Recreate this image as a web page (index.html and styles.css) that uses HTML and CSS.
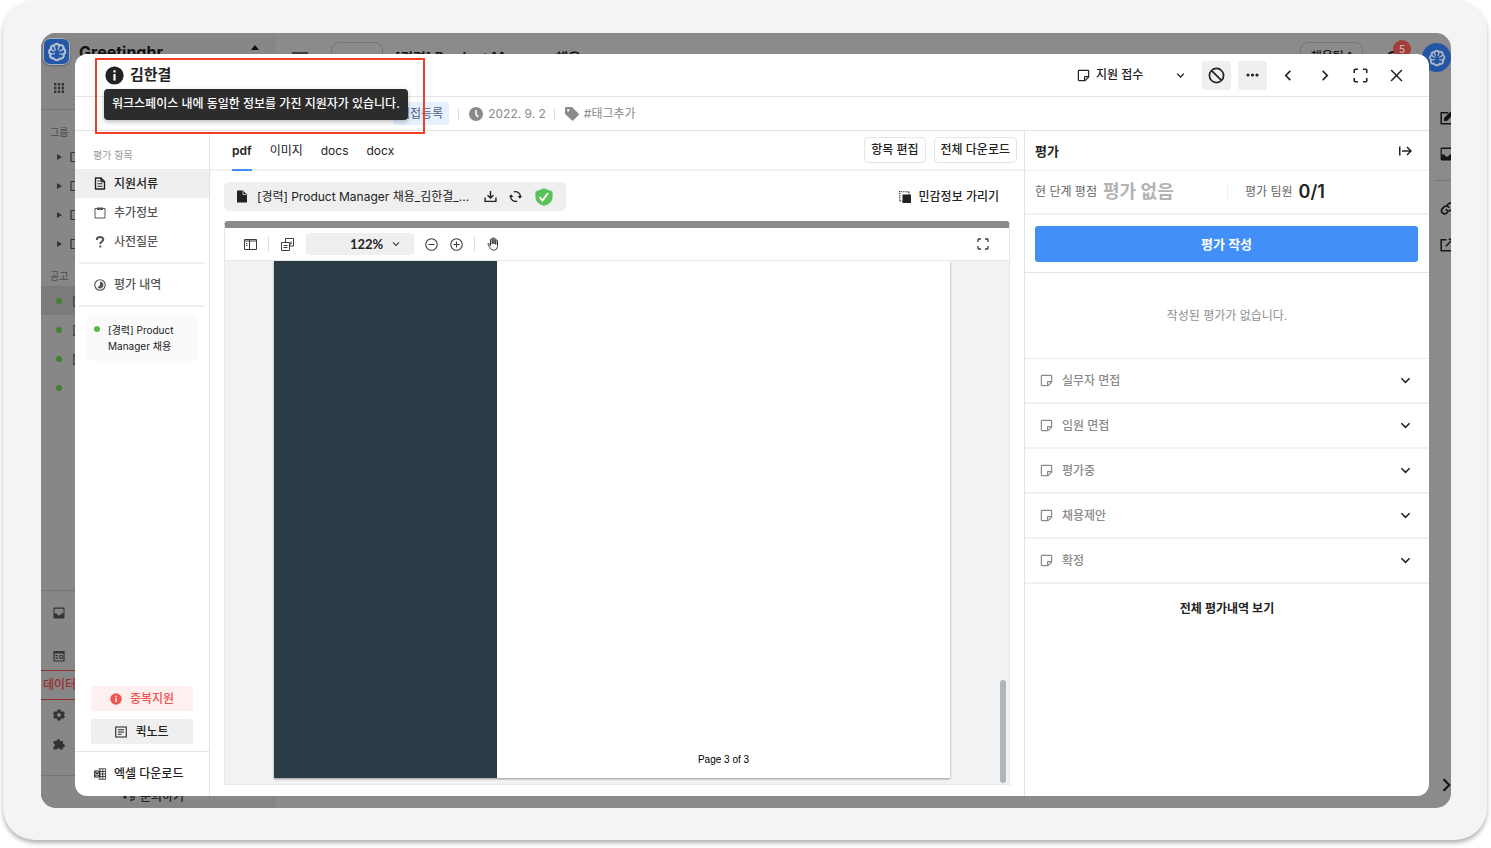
FILE: index.html
```html
<!DOCTYPE html>
<html lang="ko">
<head>
<meta charset="utf-8">
<meta name="viewport" content="width=device-width, initial-scale=1">
<title>Greetinghr</title>
<link rel="stylesheet" href="styles.css">
</head>
<body>
<svg class="sprite" aria-hidden="true">
  <symbol id="flower" viewBox="0 0 24 24"><g fill="none" stroke="currentColor" stroke-linejoin="round" stroke-linecap="round"><path stroke-width="2.600" d="M8.500 4.500C9.500 1.500 13.500 1.500 14.500 4.200C17.500 2.500 20.500 5 19.800 8C22.800 9.500 22.500 13.500 20 14.500C21 18 18.500 20.500 15.500 19.800C13.500 22.500 9.500 22.500 8 19.500C4.500 20 2.800 17 4.500 14.500C1.500 13 2 9 5 8.500C4 5.500 6 3.500 8.500 4.500Z"/><path stroke-width="1.600" d="M8.500 5l1.500 4.500M14.500 5l-1 4M19.500 8.500L15.500 11M20 14.500h-4.500M5 9l3.500 2M5 14.500l4-.5"/></g></symbol>
  <symbol id="note" viewBox="0 0 24 24"><path fill="none" stroke="currentColor" stroke-width="2.200" stroke-linejoin="round" d="M2.500 4a1.500 1.500 0 0 1 1.500-1.500h16A1.500 1.500 0 0 1 21.500 4v11l-6.500 6.500H4A1.500 1.500 0 0 1 2.500 20zM14 21v-7h7"/></symbol>
  <symbol id="down" viewBox="0 0 24 24"><path fill="none" stroke="currentColor" stroke-width="3.400" d="M3 7l9 9 9-9"/></symbol>
  <symbol id="info" viewBox="0 0 24 24"><circle cx="12" cy="12" r="11.500" fill="currentColor"/><path fill="#fff" d="M10.600 5.500h2.800v2.800h-2.800zM10.600 10.200h2.800v8h-2.800z"/></symbol>
  <symbol id="expand" viewBox="0 0 24 24"><path fill="none" stroke="currentColor" stroke-width="2.600" d="M2 8V3.500Q2 2 3.500 2H8M16 2h4.500Q22 2 22 3.500V8M22 16v4.500q0 1.500-1.500 1.500H16M8 22H3.500Q2 22 2 20.500V16"/></symbol>
  <symbol id="inbox" viewBox="0 0 24 24"><path fill="currentColor" fill-rule="evenodd" d="M3 1h18a2 2 0 0 1 2 2v18a2 2 0 0 1-2 2H3a2 2 0 0 1-2-2V3a2 2 0 0 1 2-2zm0 2.500V13h5c0 5 8 5 8 0h5V3.500z"/></symbol>
  <symbol id="board" viewBox="0 0 24 24"><path fill="none" stroke="currentColor" stroke-width="2" d="M2 3h20v19H2z"/><path fill="currentColor" d="M6 1h12v5H6z"/></symbol>
  <symbol id="folder" viewBox="0 0 24 24"><path fill="none" stroke="currentColor" stroke-width="2.400" stroke-linejoin="round" d="M2 3h8l2 3h10v15H2z"/></symbol>
</svg>

<main class="frame">
<div class="screen">

  <aside class="side" aria-label="워크스페이스">
    <div class="brand"><span class="logo"><svg width="20" height="20"><use href="#flower"/></svg></span><strong>Greetinghr</strong><svg class="updown" width="8" height="14" viewBox="0 0 8 14"><path fill="currentColor" d="M4 0l4 5H0zM4 14l4-5H0z"/></svg></div>
    <div class="apps"><svg width="10" height="10" viewBox="0 0 10 10"><path fill="currentColor" d="M0 0h2.400v2.400H0zM3.800 0h2.400v2.400H3.800zM7.600 0H10v2.400H7.600zM0 3.800h2.400v2.400H0zM3.800 3.800h2.400v2.400H3.800zM7.600 3.800H10v2.400H7.600zM0 7.600h2.400V10H0zM3.800 7.600h2.400V10H3.800zM7.600 7.600H10V10H7.600z"/></svg></div>
    <h2>그룹</h2>
    <div class="group"><i class="tri"></i><svg width="14" height="12"><use href="#folder"/></svg></div>
    <div class="group"><i class="tri"></i><svg width="14" height="12"><use href="#folder"/></svg></div>
    <div class="group"><i class="tri"></i><svg width="14" height="12"><use href="#folder"/></svg></div>
    <div class="group"><i class="tri"></i><svg width="14" height="12"><use href="#folder"/></svg></div>
    <h2 class="posts">공고</h2>
    <div class="post on"><i class="dot"></i>[</div>
    <div class="post"><i class="dot"></i>[</div>
    <div class="post"><i class="dot"></i>[</div>
    <div class="post"><i class="dot"></i></div>
    <div class="side-foot">
      <div class="tool tall"><svg width="12" height="12"><use href="#inbox"/></svg></div>
      <div class="tool tall"><svg width="12" height="12" viewBox="0 0 24 24"><path fill="none" stroke="currentColor" stroke-width="2.400" d="M2 3h20v19H2z"/><path fill="currentColor" d="M2 2h20v5H2zM5 10h5v2.500H5zM5 15h5v2.500H5z"/><path fill="none" stroke="currentColor" stroke-width="2" d="M13.500 11h5v6h-5z"/></svg></div>
      <div class="data">데이터</div>
      <div class="tool"><svg width="12" height="12" viewBox="0 0 24 24"><path fill="currentColor" fill-rule="evenodd" d="M9 1h6l.8 3.600 2 1.100L21.300 4.600l2.700 4.700-2.700 2.500v.8l2.700 2.400-2.700 4.700-3.500-1.100-2 1.100L15 23H9l-.8-3.300-2-1.100-3.500 1.100L0 15l2.700-2.400v-.8L0 9.300l2.700-4.700 3.500 1.100 2-1.100zM12 8a4 4 0 1 0 0 8 4 4 0 0 0 0-8z"/></svg></div>
      <div class="tool"><svg width="12" height="12" viewBox="0 0 24 24"><path fill="currentColor" d="M1 6h6.500a3.300 3.300 0 1 1 6.500 0h6v6.200a3.200 3.200 0 1 1 0 6.300V23h-6a3.200 3.200 0 0 0-6.200 0H1v-6.200a3 3 0 0 0 0-6z"/></svg></div>
      <div class="ask"><svg width="13" height="12" viewBox="0 0 26 24"><path fill="none" stroke="currentColor" stroke-width="2.600" d="M4 10a9 9 0 0 1 18 0v9q0 3-4 3h-4"/><path fill="currentColor" d="M1 10h6v9H1zM15 10h4v8h-4z"/></svg>문의하기</div>
    </div>
  </aside>

  <section class="board">
    <header class="topbar">
      <svg class="burger" width="16" height="12" viewBox="0 0 16 12"><path fill="currentColor" d="M0 0h16v3H0zM0 6h16v2H0z"/></svg>
      <span class="status"><i class="dot"></i></span>
      <strong>[경력] Product Manager 채용</strong>
      <span class="team">채용팀 1</span>
      <span class="bell"><svg width="16" height="16" viewBox="0 0 24 24"><path fill="none" stroke="currentColor" stroke-width="3" d="M4 19V11a8 8 0 0 1 16 0v8z"/></svg><b>5</b></span>
      <span class="avatar"><svg width="18" height="18"><use href="#flower"/></svg></span>
    </header>
    <div class="rail">
      <svg width="14" height="14" viewBox="0 0 24 24"><path fill="none" stroke="currentColor" stroke-width="2.600" d="M14 3H2v19h20V12"/><path fill="currentColor" d="M7 17v-5L18 1l5 5-11 11z"/></svg>
      <svg width="14" height="14"><use href="#inbox"/></svg>
      <hr>
      <svg width="15" height="15" viewBox="0 0 24 24"><path fill="none" stroke="currentColor" stroke-width="2.600" stroke-linecap="round" d="M10 14a5 5 0 0 0 7.500.5l3-3A5 5 0 0 0 13.500 4.500L12 6M14 10a5 5 0 0 0-7.500-.5l-3 3a5 5 0 0 0 7 7L12 18"/></svg>
      <svg width="14" height="14" viewBox="0 0 24 24"><path fill="none" stroke="currentColor" stroke-width="2.600" d="M11 3H2v19h19v-9M15 2h7v7M22 2L10 14"/></svg>
      <svg class="rail-end" width="14" height="14" viewBox="0 0 24 24"><path fill="none" stroke="currentColor" stroke-width="3.600" d="M6 2l10 10L6 22"/></svg>
    </div>
  </section>

  <article class="modal" role="dialog" aria-label="김한결">
    <header class="head">
      <svg width="19" height="19"><use href="#info"/></svg>
      <h1>김한결</h1>
      <div class="stage"><svg width="13" height="13"><use href="#note"/></svg><select aria-label="단계"><option>지원 접수</option></select><svg width="9" height="9"><use href="#down"/></svg></div>
      <div class="actions">
        <button class="fill" aria-label="탈락"><svg width="17" height="17" viewBox="0 0 24 24"><path fill="none" stroke="currentColor" stroke-width="2.400" d="M12 2a10 10 0 1 0 0 20 10 10 0 0 0 0-20zM5 5l14 14"/></svg></button>
        <button class="fill" aria-label="더보기"><svg width="13" height="4" viewBox="0 0 13 4"><circle cx="2" cy="2" r="1.600"/><circle cx="6.500" cy="2" r="1.600"/><circle cx="11" cy="2" r="1.600"/></svg></button>
        <button aria-label="이전"><svg width="11" height="11" viewBox="0 0 24 24"><path fill="none" stroke="currentColor" stroke-width="3.600" d="M16 2L6 12l10 10"/></svg></button>
        <button aria-label="다음"><svg width="11" height="11" viewBox="0 0 24 24"><path fill="none" stroke="currentColor" stroke-width="3.600" d="M8 2l10 10L8 22"/></svg></button>
        <button aria-label="전체 화면"><svg width="15" height="15"><use href="#expand"/></svg></button>
        <button aria-label="닫기"><svg width="13" height="13" viewBox="0 0 24 24"><path fill="none" stroke="currentColor" stroke-width="2.800" d="M2 2l20 20M22 2L2 22"/></svg></button>
      </div>
    </header>
    <div class="meta">
      <span class="chip">직접등록</span>
      <span class="item"><svg width="14" height="14" viewBox="0 0 24 24"><circle cx="12" cy="12" r="12" fill="currentColor"/><path fill="none" stroke="#fff" stroke-width="2.600" d="M12 5v8l4 4"/></svg>2022. 9. 2</span>
      <span class="item"><svg width="14" height="14" viewBox="0 0 24 24"><path fill="currentColor" fill-rule="evenodd" d="M0 2Q0 0 2 0H12l11.500 11.500q1 1 0 2l-9.500 9.500q-1 1-2 0L0 12zM5.500 3.500a2 2 0 1 0 0 4 2 2 0 0 0 0-4z"/></svg>#태그추가</span>
    </div>

    <div class="body">
      <nav class="nav">
        <h2>평가 항목</h2>
        <a class="on" href="#docs"><svg width="12" height="13" viewBox="0 0 24 26"><path fill="none" stroke="currentColor" stroke-width="2.800" stroke-linejoin="round" d="M3 2h11l7 7v15H3zM14 2v7h7"/><path stroke="currentColor" stroke-width="2.200" d="M7 8h4M7 13.500h10M7 18.500h10"/></svg>지원서류</a>
        <a href="#extra"><svg width="12" height="12"><use href="#board"/></svg>추가정보</a>
        <a href="#survey"><svg width="12" height="12" viewBox="0 0 24 24"><path fill="none" stroke="currentColor" stroke-width="4" d="M5.500 8q0-6 6.500-6t6.500 5c0 4-6 4-6 9"/><path fill="currentColor" d="M10.500 19h4v4h-4z"/></svg>사전질문</a>
        <hr>
        <a href="#history"><svg width="12" height="12" viewBox="0 0 24 24"><circle cx="12" cy="12" r="10.500" fill="none" stroke="currentColor" stroke-width="2.400"/><path fill="currentColor" d="M12 5a7 7 0 1 1-5 12l5-5z"/></svg>평가 내역</a>
        <hr>
        <p class="posting"><i class="dot"></i>[경력] Product Manager 채용</p>
        <div class="nav-foot">
          <button class="dup"><svg width="12" height="12"><use href="#info"/></svg>중복지원</button>
          <button class="memo"><svg width="12" height="12" viewBox="0 0 24 24"><path fill="none" stroke="currentColor" stroke-width="2.200" d="M1.500 2h21v20h-21zM6 7.500h12M6 12h12M6 16.500h7"/></svg>퀵노트</button>
        </div>
        <a class="excel" href="#excel"><svg width="12" height="12" viewBox="0 0 24 24"><path fill="none" stroke="currentColor" stroke-width="1.600" d="M9 1.500h14v21H9M12 7h11M12 12h11M12 17h11M17.500 2v20M12 2v20"/><path fill="none" stroke="currentColor" stroke-width="2.400" d="M1.500 6h9v12h-9zM3.500 8.500l5 7M8.500 8.500l-5 7"/></svg>엑셀 다운로드</a>
      </nav>

      <section class="docs">
        <div class="tabs">
          <a class="on" href="#pdf">pdf</a><a href="#image">이미지</a><a href="#d">docs</a><a href="#x">docx</a>
          <div class="tab-actions"><button>항목 편집</button><button>전체 다운로드</button></div>
        </div>
        <div class="file-row">
          <div class="file">
            <svg width="12" height="13" viewBox="0 0 24 26"><path fill="currentColor" d="M2 2q0-1 1-1h11l8 8v15q0 1-1 1H3q-1 0-1-1z"/><path fill="none" stroke="#efefef" stroke-width="1.500" d="M14 2v7h7"/></svg>
            <span>[경력] Product Manager 채용_김한결_...</span>
            <button aria-label="다운로드"><svg width="13" height="13" viewBox="0 0 24 24"><path fill="none" stroke="currentColor" stroke-width="2.600" d="M12 2v13M6.500 9.500L12 15l5.500-5.500M2 14v7h20v-7"/></svg></button>
            <button aria-label="새로고침"><svg width="13" height="13" viewBox="0 0 24 24"><path fill="none" stroke="currentColor" stroke-width="2.600" d="M9 3.500A9 9 0 0 1 21 12v2M15 20.500A9 9 0 0 1 3 12v-2"/><path fill="currentColor" d="M16 11h8l-4 5zM0 13h8L4 8z"/></svg></button>
            <svg width="20" height="20" viewBox="0 0 20 20"><path fill="#5bbf5a" stroke="#dff0de" stroke-width="1" d="M10 .8l9 3.500v5.700c0 4.500-3.500 7.500-9 9.300C4.500 17.500 1 14.500 1 10V4.300z"/><path fill="none" stroke="#fff" stroke-width="1.800" d="M5.500 10l3 3.500L14 6"/></svg>
          </div>
          <button class="mask"><svg width="12" height="12" viewBox="0 0 24 24"><path fill="currentColor" d="M7 7h17v17H7z"/><path fill="none" stroke="currentColor" stroke-width="2.200" stroke-dasharray="2.400 1.800" d="M0 1.500h20M1.500 0v20M20 1.500V7M1.500 20H7"/></svg>민감정보 가리기</button>
        </div>
        <div class="viewer">
          <div class="tools">
            <button aria-label="사이드바"><svg width="13" height="11" viewBox="0 0 26 22"><path fill="none" stroke="currentColor" stroke-width="2" d="M1 1h24v20H1zM11 1v20M1 4h24M4 9h3M4 13h3"/></svg></button>
            <i class="sep"></i>
            <button aria-label="페이지"><svg width="13" height="13" viewBox="0 0 26 26"><path fill="none" stroke="currentColor" stroke-width="2" d="M9 8V1h16v15h-7M1 9h16v16H1zM5 15h8M5 19h8M20 7v5h-2"/></svg></button>
            <div class="zoom"><select aria-label="배율"><option>122%</option></select><svg width="8" height="8"><use href="#down"/></svg></div>
            <button aria-label="축소"><svg width="13" height="13" viewBox="0 0 26 26"><path fill="none" stroke="currentColor" stroke-width="2.200" d="M13 1.500a11.500 11.500 0 1 0 0 23 11.500 11.500 0 0 0 0-23zM7 13h12"/></svg></button>
            <button aria-label="확대"><svg width="13" height="13" viewBox="0 0 26 26"><path fill="none" stroke="currentColor" stroke-width="2.200" d="M13 1.500a11.500 11.500 0 1 0 0 23 11.500 11.500 0 0 0 0-23zM7 13h12M13 7v12"/></svg></button>
            <i class="sep"></i>
            <button aria-label="이동"><svg width="12" height="14" viewBox="0 0 24 28"><path fill="none" stroke="currentColor" stroke-width="2" stroke-linejoin="round" stroke-linecap="round" d="M7 17V6q0-2 1.800-2T10.500 6v7M10.500 13V3.500q0-2 1.800-2t1.700 2V13M14 13V5q0-2 1.700-2t1.800 2v9M17.500 14V8q0-2 1.700-2T21 8v11q0 7.500-8 7.500-4.500 0-7-5L2 15q-.5-2 1.200-2.200T7 17"/></svg></button>
            <button class="full" aria-label="전체 화면"><svg width="12" height="12"><use href="#expand"/></svg></button>
          </div>
          <div class="canvas">
            <div class="page"><div class="band"></div><p>Page 3 of 3</p></div>
            <i class="thumb"></i>
          </div>
        </div>
      </section>

      <section class="eval">
        <header class="eval-head"><h2>평가</h2><button aria-label="패널 접기"><svg width="13" height="10" viewBox="0 0 26 20"><path fill="none" stroke="currentColor" stroke-width="3" d="M1.500 1v18M6 10h18M16 2l8 8-8 8"/></svg></button></header>
        <div class="stats"><p>현 단계 평점 <b class="none">평가 없음</b></p><p>평가 팀원 <b>0/1</b></p></div>
        <div class="write"><button>평가 작성</button></div>
        <p class="empty">작성된 평가가 없습니다.</p>
        <button class="step"><svg width="13" height="13"><use href="#note"/></svg>실무자 면접<svg class="arrow" width="11" height="11"><use href="#down"/></svg></button>
        <button class="step"><svg width="13" height="13"><use href="#note"/></svg>임원 면접<svg class="arrow" width="11" height="11"><use href="#down"/></svg></button>
        <button class="step"><svg width="13" height="13"><use href="#note"/></svg>평가중<svg class="arrow" width="11" height="11"><use href="#down"/></svg></button>
        <button class="step"><svg width="13" height="13"><use href="#note"/></svg>채용제안<svg class="arrow" width="11" height="11"><use href="#down"/></svg></button>
        <button class="step"><svg width="13" height="13"><use href="#note"/></svg>확정<svg class="arrow" width="11" height="11"><use href="#down"/></svg></button>
        <button class="all">전체 평가내역 보기</button>
      </section>
    </div>

    <div class="tooltip" role="tooltip">워크스페이스 내에 동일한 정보를 가진 지원자가 있습니다.</div>
    <div class="marker"></div>
  </article>
</div>
</main>
</body>
</html>
```
FILE: styles.css
```css
* { box-sizing: border-box; }
body, h1, h2, p, hr { margin: 0; }
body {
  display: flex;
  height: 100vh;
  min-height: 640px;
  padding: 0 4px 8px 3px;
  background: #fff;
  color: #222;
  font: 12px/16px Inter, "Noto Sans CJK KR", sans-serif;
}
button, select { border: 0; padding: 0; background: none; color: inherit; font: inherit; }
select { appearance: none; }
a { color: inherit; text-decoration: none; }
svg { display: block; flex: none; }
button svg { fill: currentColor; }
.sprite { position: absolute; width: 0; height: 0; }
.dot { flex: none; width: 6px; height: 6px; border-radius: 50%; background: #56bd3c; }

.frame {
  flex: 1;
  display: flex;
  padding: 33px 36px 32px 38px;
  border-radius: 32px;
  background: #f4f4f6;
  box-shadow: 0 3px 4px rgba(0, 0, 0, .3);
}
.screen {
  position: relative;
  flex: 1;
  display: flex;
  border-radius: 15px;
  background: #8b8b8b;
  overflow: hidden;
}

/* workspace behind the dialog */
.side {
  display: flex;
  flex-direction: column;
  width: 232px;
  background: #878787;
  color: #333;
  box-shadow: 0 0 4px rgba(0, 0, 0, .15);
}
.brand { display: flex; align-items: center; gap: 9px; height: 37px; padding: 0 14px 0 2px; color: #111; font-size: 16px; }
.logo { display: grid; place-items: center; width: 27px; height: 27px; border: 1px solid #a5b0c0; border-radius: 7px; background: #2357a5; color: #b3bfd0; box-shadow: 0 1px 2px rgba(0, 0, 0, .3); }
.updown { margin-left: auto; }
.apps { height: 40px; padding: 13px; border-bottom: 1px solid #757575; }
.side h2 { padding: 15px 9px 2px; color: #4a4a4a; font-size: 10px; font-weight: 400; line-height: 15px; }
.side .posts { padding: 11px 9px 2px; }
.group { display: flex; align-items: center; gap: 7px; height: 29px; padding-left: 16px; }
.tri { border: 3px solid transparent; border-left: 5px solid #333; border-right: 0; }
.post { display: flex; align-items: center; gap: 10px; height: 29px; padding-left: 15px; }
.post.on { background: #7b7b7b; }
.side .dot { background: #43802f; }
.side-foot { margin-top: auto; border-top: 1px solid #757575; }
.tool { display: flex; align-items: center; height: 29px; padding-left: 12px; }
.tall { height: 43px; }
.tall + .tall { height: 36px; padding-top: 8px; }
.data { height: 30px; padding-left: 2px; border: solid #8f3030; border-width: 1px 0; color: #982f2f; line-height: 28px; font-weight: 500; }
.ask { display: flex; gap: 4px; margin-top: 17px; padding: 13px 0 3px 82px; border-top: 1px solid #757575; color: #222; font-weight: 500; }

.board { flex: 1; display: flex; flex-direction: column; min-width: 0; color: #151515; }
.topbar { display: flex; align-items: center; height: 49px; padding: 0 1px 0 19px; }
.topbar strong { margin-left: 12px; font-size: 14px; font-weight: 600; }
.burger { color: #3c3c3c; }
.status, .team { height: 32px; border: 1px solid #757575; border-radius: 8px; }
.status { width: 52px; margin-left: 23px; padding: 9px; }
.team { margin-left: auto; padding: 6px 10px; font-weight: 500; }
.bell { position: relative; margin: 0 21px 0 22px; }
.bell b { position: absolute; left: 8px; top: -10px; width: 18px; height: 18px; border-radius: 50%; background: #a53c3c; color: #c4b4b4; font-size: 10px; font-weight: 500; line-height: 18px; text-align: center; }
.avatar { display: grid; place-items: center; width: 29px; height: 29px; margin-right: -1px; border-radius: 50%; background: #2357a5; color: #a9b4c4; }
.rail { flex: 1; align-self: flex-end; display: flex; flex-direction: column; align-items: center; gap: 22px; width: 30px; margin-right: -11px; padding: 29px 0 16px; color: #151515; }
.rail hr { width: 26px; border: 0; border-top: 1px solid #757575; margin: -3px 0 -2px; }
.rail-end { margin-top: auto; }

/* applicant dialog */
.modal {
  position: absolute;
  inset: 21px 22px 12px 34px;
  display: flex;
  flex-direction: column;
  border-radius: 12px;
  background: #fff;
}
.head { display: flex; align-items: center; height: 43px; padding: 0 18px 0 30px; border-bottom: 1px solid #e4e4e4; }
.head h1 { margin-left: 6px; font-size: 15px; font-weight: 600; }
.stage { display: flex; align-items: center; gap: 6px; margin: 0 17px 0 auto; font-weight: 500; }
.stage select { width: 74px; }
.actions { display: flex; gap: 7px; }
.actions button { display: grid; place-items: center; width: 29px; height: 29px; border-radius: 3px; }
.actions .fill { background: #efefef; }
.meta { display: flex; align-items: center; height: 34px; padding-left: 318px; border-bottom: 1px solid #e4e4e4; color: #8a8a8a; }
.chip { margin-right: 9px; padding: 3px 6px; border-radius: 3px; background: #e6f0fe; color: #4a5f7c; line-height: 17px; }
.item { display: flex; align-items: center; gap: 5px; padding-right: 8px; line-height: 12px; }
.item::before { content: ""; height: 12px; margin-right: 5px; border-left: 1px solid #ddd; }

.body { flex: 1; display: grid; grid-template-columns: 135px minmax(0, 1fr) 405px; min-height: 0; }

.nav { display: flex; flex-direction: column; border-right: 1px solid #e4e4e4; color: #555; font-weight: 500; }
.nav h2 { padding: 17px 18px 6px; color: #999; font-size: 10px; font-weight: 400; line-height: 15px; }
.nav a { display: flex; align-items: center; gap: 8px; height: 29px; padding-left: 19px; }
.nav .on { background: #efefef; color: #222; }
.nav hr { height: 2px; margin: 6px 4px; border: 0; background: #efefef; }
.posting { display: flex; gap: 8px; margin: 2px 11px; padding: 7px 8px; border-radius: 6px; background: #fafafa; color: #222; font-size: 10px; font-weight: 400; }
.posting .dot { margin-top: 4px; }
.nav-foot { display: flex; flex-direction: column; gap: 8px; margin-top: auto; padding: 0 16px 7px; }
.nav-foot button { display: flex; align-items: center; justify-content: center; gap: 8px; height: 25px; border-radius: 3px; background: #efefef; color: #222; font-weight: 500; }
.nav-foot .dup { background: #fdf0ef; color: #ee5552; }
.nav .excel { height: 45px; border-top: 1px solid #e4e4e4; color: #222; }

.docs { display: flex; flex-direction: column; padding-bottom: 11px; }
.tabs { display: flex; align-items: center; gap: 18px; height: 40px; padding: 0 7px 0 22px; border-bottom: 2px solid #f1f1f1; }
.tabs a { align-self: flex-end; height: 40px; margin-bottom: -2px; line-height: 40px; }
.tabs .on { border-bottom: 2px solid #428ff8; font-weight: 600; }
.tab-actions { display: flex; gap: 8px; margin-left: auto; }
.tab-actions button { height: 26px; padding: 0 6px; border: 1px solid #e4e4e4; border-radius: 4px; font-weight: 500; }
.file-row { display: flex; align-items: center; justify-content: space-between; padding: 11px 25px 10px 14px; }
.file { display: flex; align-items: center; height: 29px; padding: 0 12px; border-radius: 5px; background: #efefef; }
.file span { margin: 0 15px 0 9px; }
.file button { margin-right: 12px; }
.mask { display: flex; align-items: center; gap: 8px; font-weight: 500; }
.viewer { flex: 1; display: flex; flex-direction: column; margin: 0 14px; border: 1px solid #e6e8ea; border-top: 7px solid #8b8b8b; border-radius: 4px 4px 0 0; min-height: 0; }
.tools { display: flex; align-items: center; height: 33px; padding: 0 20px 0 19px; border-bottom: 1px solid #e6e8ea; color: #3c3c3c; }
.sep { height: 16px; margin: 0 12px 0 11px; border-left: 1px solid #ddd; }
.zoom { display: grid; align-items: center; width: 108px; height: 22px; margin: 0 11px 0 12px; border-radius: 3px; background: #efefef; }
.zoom > * { grid-area: 1 / 1; }
.zoom select { width: 100%; height: 100%; padding-left: 44px; color: #222; font: 700 13px/16px Lato, sans-serif; }
.zoom svg { justify-self: end; margin-right: 14px; pointer-events: none; }
.zoom + button { margin-right: 12px; }
.full { margin-left: auto; }
.canvas { flex: 1; display: flex; padding: 0 3px 0 49px; background: #f0f2f4; }
.page { flex: 1; display: grid; grid-template-columns: 33% 1fr; margin: 0 50px 6px 0; background: #fff; box-shadow: 0 1px 2px rgba(0, 0, 0, .4); clip-path: inset(0 -4px -4px -4px); }
.band { background: #2c3c46; }
.page p { align-self: end; padding-bottom: 10px; color: #000; font: 10px/16px "Liberation Sans", sans-serif; text-align: center; }
.thumb { align-self: flex-end; width: 6px; height: 103px; margin-bottom: 1px; border-radius: 3px; background: #adb5bd; }

.eval { display: flex; flex-direction: column; border-left: 1px solid #e4e4e4; }
.eval-head { display: flex; align-items: center; justify-content: space-between; height: 40px; padding: 0 17px 0 10px; border-bottom: 1px solid #efefef; }
.eval-head h2 { font-size: 13px; font-weight: 600; }
.stats { display: grid; grid-template-columns: 1fr 1fr; align-items: center; height: 44px; border-bottom: 2px solid #f1f1f1; color: #666; }
.stats p { display: flex; align-items: center; gap: 6px; padding-left: 10px; }
.stats p + p { padding-left: 17px; border-left: 1px solid #efefef; }
.stats b { color: #222; font-size: 18px; font-weight: 600; }
.stats .none { color: #b3b3b3; }
.write { padding: 11px 11px 10px 10px; border-bottom: 1px solid #e4e4e4; }
.write button { width: 100%; height: 36px; border-radius: 3px; background: #428ff8; color: #fff; font-size: 13px; font-weight: 600; }
.empty { padding: 35px 0 34px; border-bottom: 1px dotted #ddd; color: #8f8f8f; text-align: center; }
.step { display: flex; align-items: center; gap: 9px; height: 45px; padding: 0 18px 0 15px; border-bottom: 2px solid #f1f1f1; color: #8a8a8a; font-weight: 500; }
.arrow { margin-left: auto; color: #222; }
.all { padding: 17px; font-weight: 600; }

.tooltip { position: absolute; left: 29px; top: 35px; padding: 7px 8px 8px; border-radius: 4px; background: #2c2c2c; color: #fff; font-weight: 500; box-shadow: 0 2px 5px rgba(0, 0, 0, .25); }
.marker { position: absolute; left: 20px; top: 4px; width: 330px; height: 76px; border: 2px solid #ef4128; }
```
